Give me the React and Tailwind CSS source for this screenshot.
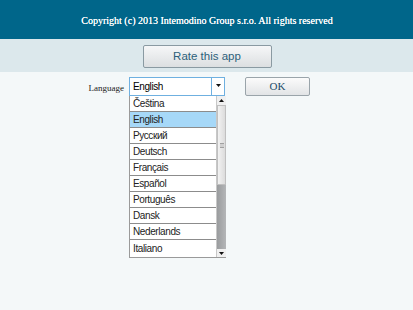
import React from "react";

const langs = ["Čeština", "English", "Русский", "Deutsch", "Français", "Español", "Português", "Dansk", "Nederlands", "Italiano"];

export default function App() {
  return (
    <div className="w-[413px] h-[310px] bg-[#f4f8f9] flex flex-col overflow-hidden">
      <div className="h-[39px] bg-[#00668a] flex items-center justify-center">
        <span className="text-white text-[10px] pt-[1px] ml-[1px] [text-shadow:0_0_0.4px_#fff]" style={{ fontFamily: '"Liberation Serif", serif' }}>
          Copyright (c) 2013 Intemodino Group s.r.o. All rights reserved
        </span>
      </div>
      <div className="h-[33px] bg-[#dce8ec] flex justify-center pt-[6px]">
        <button className="w-[129px] h-[23px] ml-[1px] rounded-[2px] border border-[#8a9aa2] bg-gradient-to-b from-[#f6f7f8] to-[#dcdfe1] text-[#2d5f7a] text-[11.5px] flex items-center justify-center" style={{ fontFamily: '"Liberation Sans", sans-serif' }}>
          Rate this app
        </button>
      </div>
      <div className="flex pt-[5px]">
        <div className="w-[124px] text-right pt-[5px] text-[9px] text-[#222]" style={{ fontFamily: '"Liberation Serif", serif' }}>
          Language
        </div>
        <div className="ml-[5px] w-[97px] flex flex-col">
          <div className="h-[19px] w-[96px] border border-[#6fb0e0] bg-white flex">
            <div className="flex-1 text-[10px] tracking-[-0.4px] text-black pl-[3px] flex items-center" style={{ fontFamily: '"Liberation Sans", sans-serif' }}>English</div>
            <div className="w-[13px] border-l border-[#6fb0e0] flex items-center justify-center pb-[2px]">
              <svg width="5" height="3" viewBox="0 0 5 3"><path d="M0 0h5L2.5 3z" fill="#111" /></svg>
            </div>
          </div>
          <div className="flex h-[162px] border-l border-b border-[#9a9a9a]">
            <div className="flex-1 flex flex-col bg-white">
              {langs.map((l, i) => (
                <div
                  key={l}
                  className={`h-[16px] border-b border-[#8c8c8c] last:border-b-0 flex items-center pl-[3px] text-[10px] tracking-[-0.4px] text-[#222] ${i === 1 ? "bg-[#a6d8f8]" : "bg-white"}`}
                  style={{ fontFamily: '"Liberation Sans", sans-serif' }}
                >
                  {l}
                </div>
              ))}
            </div>
            <div className="w-[10px] flex flex-col bg-[#a2a4a6] border-l border-[#c8c8c8]">
              <div className="h-[9px] bg-[#f0f0f0] flex items-center justify-center">
                <svg width="5" height="3" viewBox="0 0 5 3"><path d="M0 3h5L2.5 0z" fill="#111" /></svg>
              </div>
              <div className="h-[80px] bg-gradient-to-r from-[#f2f2f2] to-[#dcdcdc] border border-[#c0c0c0] flex items-center justify-center">
                <div className="w-[4px] h-[5px] border-y border-[#a0a0a0] bg-[#d0d0d0]" />
              </div>
              <div className="flex-1 bg-gradient-to-r from-[#9a9c9e] to-[#b4b6b8]" />
              <div className="h-[8px] bg-[#f0f0f0] flex items-center justify-center">
                <svg width="5" height="3" viewBox="0 0 5 3"><path d="M0 0h5L2.5 3z" fill="#111" /></svg>
              </div>
            </div>
          </div>
        </div>
        <button className="ml-[19px] w-[65px] h-[19px] rounded-[2px] border border-[#9aa4aa] bg-gradient-to-b from-[#fbfbfb] to-[#e2e4e6] text-[11px] text-[#1d4d6a] flex items-center justify-center" style={{ fontFamily: '"Liberation Serif", serif' }}>
          OK
        </button>
      </div>
    </div>
  );
}
